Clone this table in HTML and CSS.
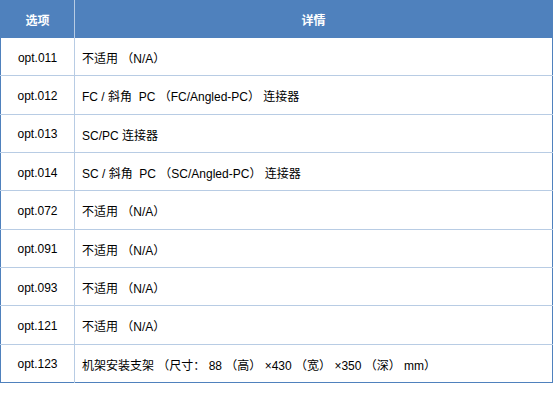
FILE: index.html
```html
<!DOCTYPE html>
<html lang="zh-CN">
<head>
<meta charset="utf-8">
<link rel="stylesheet" href="styles.css">
</head>
<body>
<table class="spec">
  <thead>
    <tr><th class="c1">选项</th><th class="c2">详情</th></tr>
  </thead>
  <tbody>
    <tr><td class="c1">opt.011</td><td class="c2">不适用 （N/A）</td></tr>
    <tr><td class="c1">opt.012</td><td class="c2">FC / 斜角 &nbsp;PC （FC/Angled-PC） 连接器</td></tr>
    <tr><td class="c1">opt.013</td><td class="c2">SC/PC 连接器</td></tr>
    <tr><td class="c1">opt.014</td><td class="c2">SC / 斜角 &nbsp;PC （SC/Angled-PC） 连接器</td></tr>
    <tr><td class="c1">opt.072</td><td class="c2">不适用 （N/A）</td></tr>
    <tr><td class="c1">opt.091</td><td class="c2">不适用 （N/A）</td></tr>
    <tr><td class="c1">opt.093</td><td class="c2">不适用 （N/A）</td></tr>
    <tr><td class="c1">opt.121</td><td class="c2">不适用 （N/A）</td></tr>
    <tr><td class="c1">opt.123</td><td class="c2">机架安装支架 （尺寸： 88 （高） ×430 （宽） ×350 （深） mm）</td></tr>
  </tbody>
</table>
</body>
</html>
```

FILE: styles.css
```css
html, body {
  margin: 0;
  padding: 0;
  background: #ffffff;
}
body {
  font-family: "Liberation Sans", "Noto Sans CJK SC", sans-serif;
  font-size: 12px;
  color: #000000;
  text-spacing-trim: space-all;
}
.spec {
  width: 553px;
  border-collapse: collapse;
  table-layout: fixed;
  border-left: 1px solid #4f81bd;
  border-right: 1px solid #4f81bd;
  border-bottom: 1px solid #4f81bd;
}
.spec th {
  background: #4f81bd;
  color: #ffffff;
  font-weight: bold;
  height: 38px;
  padding: 1px 0 0;
  text-align: center;
  border-left: 1px solid #b8cce4;
  box-sizing: border-box;
}
.spec th:first-child {
  border-left: none;
}
.spec td {
  height: 35.33px;
  padding: 2px 8px 0;
  border-top: 1px solid #b8cce4;
  border-left: 1px solid #b8cce4;
  white-space: nowrap;
}
.spec td:first-child {
  border-left: none;
}
.spec thead + tbody tr:first-child td {
  border-top: none;
}
.spec .c1 {
  width: 74px;
  text-align: center;
  padding-left: 0;
  padding-right: 0;
}
td.c2 {
  text-align: left;
  padding-left: 7px;
}
```
